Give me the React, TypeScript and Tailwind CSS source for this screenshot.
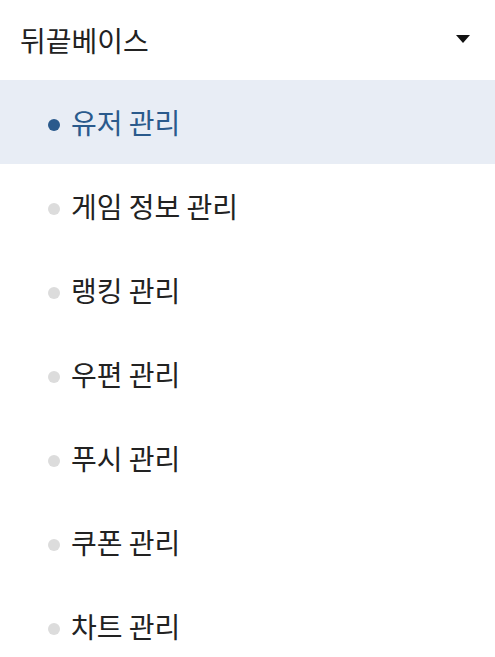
import React, { useState } from "react";

const menuItems = [
  "유저 관리",
  "게임 정보 관리",
  "랭킹 관리",
  "우편 관리",
  "푸시 관리",
  "쿠폰 관리",
  "차트 관리",
];

export default function App() {
  const [active, setActive] = useState("유저 관리");

  return (
    <div
      className="w-[495px] min-h-[657px] bg-white text-[#222]"
      style={{ fontFamily: '"Noto Sans CJK KR", "Noto Sans", sans-serif' }}
    >
      <div className="flex h-[80px] items-center justify-between pl-[20px] pr-[25px]">
        <span className="text-[28px] leading-none">뒤끝베이스</span>
        <svg width="14" height="8" viewBox="0 0 14 8" className="mt-[-3px]">
          <path d="M0 0H14L7 8Z" fill="#111" />
        </svg>
      </div>

      <ul>
        {menuItems.map((item) => {
          const isActive = item === active;
          return (
            <li
              key={item}
              onClick={() => setActive(item)}
              className={`flex h-[84px] cursor-pointer items-center pl-[48px] ${
                isActive ? "bg-[#e8edf5] text-[#2a5a8c]" : "text-[#222]"
              }`}
            >
              <span
                className={`mr-[11px] mt-[6px] h-[12px] w-[12px] rounded-full ${
                  isActive ? "bg-[#2a5a8c]" : "bg-[#dcdcdc]"
                }`}
              />
              <span className="text-[28px] leading-none">{item}</span>
            </li>
          );
        })}
      </ul>
    </div>
  );
}
